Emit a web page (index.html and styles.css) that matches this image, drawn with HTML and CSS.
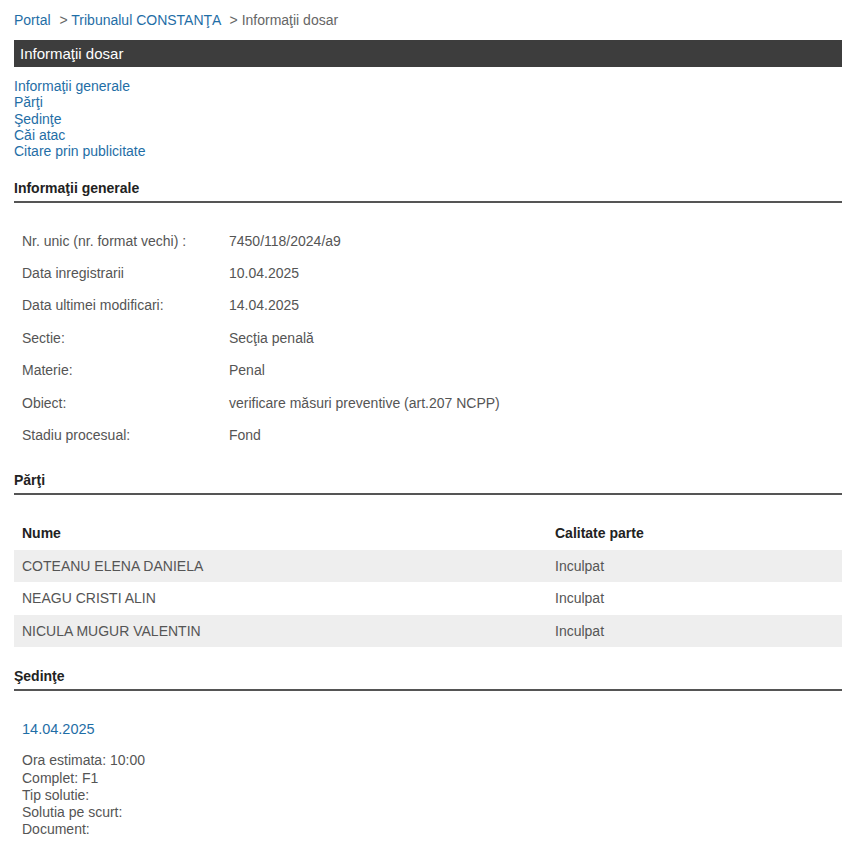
FILE: index.html
```html
<!DOCTYPE html>
<html lang="ro">
<head>
    <meta charset="UTF-8">
    <meta name="viewport" content="width=device-width, initial-scale=1.0">
    <title>Informaţii dosar</title>
    <link rel="stylesheet" href="styles.css">
</head>
<body>
    <div class="breadcrumb">
        <a href="#">Portal</a>
        <span class="sep">&gt;</span>
        <a href="#">Tribunalul CONSTANŢA</a>
        <span class="sep">&gt; Informaţii dosar</span>
    </div>

    <div class="title-bar">Informaţii dosar</div>

    <div class="nav">
        <a href="#general">Informaţii generale</a>
        <a href="#parti">Părţi</a>
        <a href="#sedinte">Şedinţe</a>
        <a href="#cai">Căi atac</a>
        <a href="#citare">Citare prin publicitate</a>
    </div>

    <!-- Informatii generale -->
    <h2 class="section-title" id="general">Informaţii generale</h2>
    <table class="info-table">
        <tr><td class="label">Nr. unic (nr. format vechi) :</td><td>7450/118/2024/a9</td></tr>
        <tr><td class="label">Data inregistrarii</td><td>10.04.2025</td></tr>
        <tr><td class="label">Data ultimei modificari:</td><td>14.04.2025</td></tr>
        <tr><td class="label">Sectie:</td><td>Secţia penală</td></tr>
        <tr><td class="label">Materie:</td><td>Penal</td></tr>
        <tr><td class="label">Obiect:</td><td>verificare măsuri preventive (art.207 NCPP)</td></tr>
        <tr><td class="label">Stadiu procesual:</td><td>Fond</td></tr>
    </table>

    <!-- Parti -->
    <h2 class="section-title" id="parti">Părţi</h2>
    <table class="parti-table">
        <thead>
            <tr><th class="name-col">Nume</th><th>Calitate parte</th></tr>
        </thead>
        <tbody>
            <tr><td>COTEANU ELENA DANIELA</td><td>Inculpat</td></tr>
            <tr><td>NEAGU CRISTI ALIN</td><td>Inculpat</td></tr>
            <tr><td>NICULA MUGUR VALENTIN</td><td>Inculpat</td></tr>
        </tbody>
    </table>

    <!-- Sedinte -->
    <h2 class="section-title" id="sedinte">Şedinţe</h2>
    <div class="sedinta">
        <div class="sedinta-date">14.04.2025</div>
        <div class="sedinta-details">
            <div>Ora estimata: 10:00</div>
            <div>Complet: F1</div>
            <div>Tip solutie:</div>
            <div>Solutia pe scurt:</div>
            <div>Document:</div>
        </div>
    </div>
</body>
</html>
```

FILE: styles.css
```css
* {
    margin: 0;
    padding: 0;
    box-sizing: border-box;
}

body {
    font-family: 'Liberation Sans', Arial, sans-serif;
    font-size: 14px;
    color: #555;
    background: #fff;
    padding: 0 13px 20px 14px;
}

a {
    color: #1f6ea6;
    text-decoration: none;
}

.breadcrumb {
    padding-top: 12px;
    line-height: 17px;
}

.breadcrumb .sep {
    color: #666;
    margin-left: 5px;
}

.title-bar {
    margin-top: 11px;
    height: 27px;
    line-height: 27px;
    padding: 0 6px;
    background: #3d3d3d;
    color: #fff;
    font-size: 15px;
}

.nav {
    margin-top: 11px;
    display: flex;
    flex-direction: column;
    align-items: flex-start;
    line-height: 16.3px;
}

.section-title {
    margin-top: 21px;
    padding-bottom: 5px;
    border-bottom: 2px solid #555;
    font-size: 14px;
    line-height: 16px;
    font-weight: bold;
    color: #222;
}

.info-table {
    margin-top: 21px;
    border-collapse: collapse;
    width: 100%;
}

.info-table td {
    height: 32.4px;
    padding: 0 8px;
    vertical-align: middle;
}

.info-table td.label {
    width: 207px;
}

.parti-table {
    margin-top: 22px;
    border-collapse: collapse;
    width: 100%;
}

.parti-table th,
.parti-table td {
    height: 32.5px;
    padding: 0 8px;
    text-align: left;
    vertical-align: middle;
}

.parti-table th {
    color: #222;
    font-weight: bold;
}

.parti-table th.name-col {
    width: 533px;
}

.parti-table tbody tr:nth-child(odd) {
    background: #eee;
}

.sedinta {
    padding: 0 8px;
}

.sedinta-date {
    margin-top: 30px;
    line-height: 17px;
    font-size: 14.5px;
    color: #1f6ea6;
}

.sedinta-details {
    margin-top: 14px;
    line-height: 17.3px;
}
```
